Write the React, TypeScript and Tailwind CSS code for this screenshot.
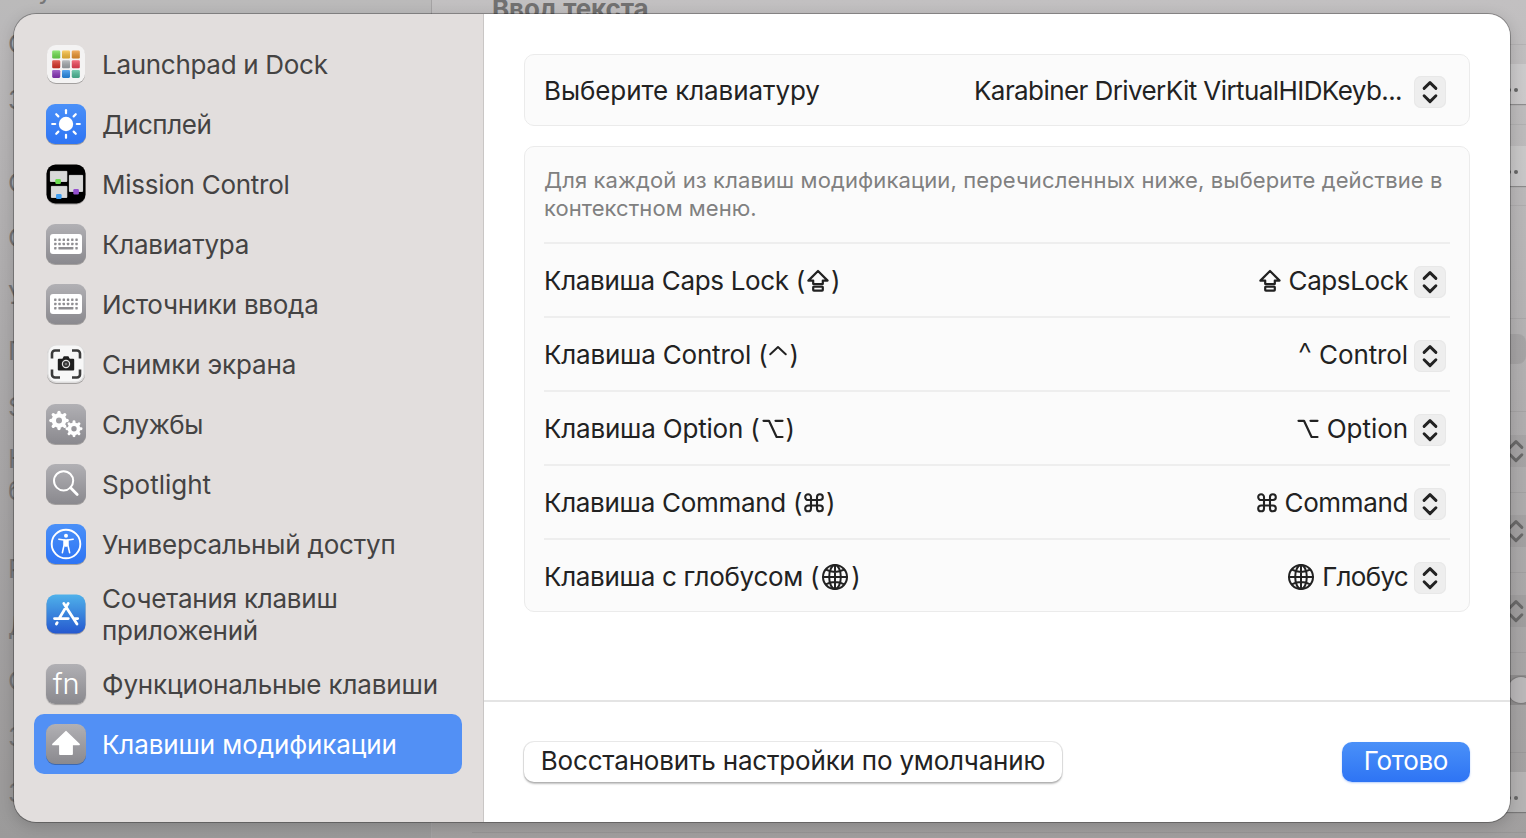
import type { ReactNode } from "react";

const tile = "block size-10 shrink-0 drop-shadow-[0_1px_0.6px_rgba(0,0,0,0.28)]";

function Defs() {
  return (
    <svg className="absolute size-0" aria-hidden="true">
      <defs>
        <linearGradient id="gray" x1="0" y1="0" x2="0" y2="1">
          <stop offset="0" stopColor="#b1b0b4" />
          <stop offset="1" stopColor="#8a898e" />
        </linearGradient>
        <linearGradient id="blue" x1="0" y1="0" x2="0" y2="1">
          <stop offset="0" stopColor="#4a90f8" />
          <stop offset="1" stopColor="#2e74f4" />
        </linearGradient>
        <linearGradient id="store" x1="0" y1="0" x2="0" y2="1">
          <stop offset="0" stopColor="#4fb1ea" />
          <stop offset="1" stopColor="#2558cf" />
        </linearGradient>
        <linearGradient id="shade" x1="0" y1="0" x2="0" y2="1">
          <stop offset="0" stopColor="#fff" stopOpacity=".25" />
          <stop offset="1" stopColor="#000" stopOpacity=".15" />
        </linearGradient>
      </defs>
    </svg>
  );
}

function Tile({ fill, children }: { fill: string; children: ReactNode }) {
  return (
    <svg viewBox="0 0 40 40" className={tile}>
      <rect width="40" height="40" rx="9" fill={fill} />
      {children}
    </svg>
  );
}

function LaunchpadIcon() {
  const colors = ["#6fe04e", "#f9bd3a", "#ee9630", "#dc3427", "#a5aaae", "#f24459", "#8a35bb", "#2a8eec", "#4fbd9b"];
  return (
    <svg viewBox="0 0 40 40" className={tile}>
      <rect x="1" y="1" width="38" height="38" rx="9" fill="#f4f3f3" />
      {colors.map((c, i) => (
        <g key={c} transform={`translate(${6.2 + (i % 3) * 9.8} ${6.5 + Math.floor(i / 3) * 9.7})`}>
          <rect width="8" height="8" rx="1.3" fill={c} />
          <rect width="8" height="8" rx="1.3" fill="url(#shade)" />
        </g>
      ))}
    </svg>
  );
}

function DisplayIcon() {
  return (
    <Tile fill="url(#blue)">
      <circle cx="20" cy="20" r="7.2" fill="#fff" />
      <g stroke="#fff" strokeWidth="2.2" strokeLinecap="round">
        {[0, 45, 90, 135, 180, 225, 270, 315].map((a) => (
          <path key={a} d="M20 6.2v3" transform={`rotate(${a} 20 20)`} />
        ))}
      </g>
    </Tile>
  );
}

function MissionIcon() {
  return (
    <svg viewBox="0 0 40 40" className={tile}>
      <rect x=".5" y=".5" width="39" height="39" rx="9" fill="#000" />
      <g fill="#d9d9d9" stroke="#f2f2f2" strokeWidth=".8">
        <path d="M4.4 7.4h16.4v10H4.4zM5.4 22.4h15.4v11H5.4zM23.4 11.4h13.2v16H23.4z" />
      </g>
      <rect x="9.3" y="15" width="5.6" height="5" rx="1.2" fill="#6cdc50" />
      <rect x="10" y="30" width="5.6" height="5" rx="1.2" fill="#3f9df0" />
      <rect x="27.3" y="25" width="5.6" height="5.4" rx="1.2" fill="#9450cf" />
    </svg>
  );
}

function KeyboardIcon() {
  return (
    <Tile fill="url(#gray)">
      <rect x="4" y="10" width="32" height="20" rx="3" fill="#fff" />
      <g fill="#8f8e92">
        {[0, 1, 2, 3, 4, 5].map((i) => (
          <g key={i}>
            <rect x={8.1 + i * 4.25} y="14.6" width="2.4" height="2.4" rx=".4" />
            <rect x={8.1 + i * 4.25} y="18.8" width="2.4" height="2.4" rx=".4" />
          </g>
        ))}
        <rect x="8.1" y="23" width="2.4" height="2.4" rx=".4" />
        <rect x="12.4" y="23" width="15" height="2.4" rx=".4" />
        <rect x="29.35" y="23" width="2.4" height="2.4" rx=".4" />
      </g>
    </Tile>
  );
}

function ScreenshotIcon() {
  return (
    <svg viewBox="0 0 40 40" className={tile}>
      <rect x="1" y="1" width="38" height="38" rx="9" fill="#dddcdc" />
      <rect x="2.5" y="1.5" width="35" height="36" rx="8" fill="#f7f7f7" />
      <path
        d="M6 14V9a3 3 0 0 1 3-3h5M26 6h5a3 3 0 0 1 3 3v5M34 25v5a3 3 0 0 1-3 3h-5M14 33H9a3 3 0 0 1-3-3v-5"
        transform="translate(0 .5)"
        fill="none"
        stroke="#3a3a3a"
        strokeWidth="2.6"
      />
      <path d="M12.8 14.8h3.6l1.4-2.6h4.6l1.4 2.6h3.4q1 0 1 1v9.6q0 1-1 1H12.8q-1 0-1-1v-9.6q0-1 1-1z" fill="#1f1f1f" />
      <circle cx="20" cy="20" r="3.6" fill="#333" stroke="#e4e4e4" strokeWidth="1.2" />
      <circle cx="20" cy="20" r="1.3" fill="#777" />
    </svg>
  );
}

function Gear({ x, y, r, hole }: { x: number; y: number; r: number; hole: number }) {
  return (
    <g transform={`translate(${x} ${y})`}>
      <circle r={(r * 0.78 + hole) / 2} fill="none" stroke="#fff" strokeWidth={r * 0.78 - hole} />
      {[0, 45, 90, 135, 180, 225, 270, 315].map((a) => (
        <path
          key={a}
          d={`M0 ${-r * 0.66}V${-r + r * 0.14}`}
          stroke="#fff"
          strokeWidth={r * 0.36}
          strokeLinecap="round"
          transform={`rotate(${a})`}
        />
      ))}
    </g>
  );
}

function ServicesIcon() {
  return (
    <Tile fill="url(#gray)">
      <Gear x={13} y={16.5} r={9.4} hole={3} />
      <Gear x={28} y={24.8} r={8.2} hole={2.7} />
    </Tile>
  );
}

function SpotlightIcon() {
  return (
    <Tile fill="url(#gray)">
      <circle cx="17.6" cy="16.8" r="9.6" fill="none" stroke="#fff" strokeWidth="2" />
      <path d="M24.6 23.8l6.6 6.6" stroke="#fff" strokeWidth="2.8" strokeLinecap="round" />
    </Tile>
  );
}

function AccessibilityIcon() {
  return (
    <Tile fill="url(#blue)">
      <circle cx="20" cy="20" r="14.3" fill="none" stroke="#fff" strokeWidth="1.9" />
      <circle cx="20" cy="11.8" r="2" fill="#fff" />
      <path d="M12.8 15.2l5.4.8v4.4l-1.8 8.2M27.2 15.2l-5.4.8v4.4l1.8 8.2" fill="none" stroke="#fff" strokeWidth="1.6" strokeLinecap="round" strokeLinejoin="round" />
      <path d="M17.6 15.2h4.8v5.2l-1 2.4h-2.8l-1-2.4z" fill="#fff" />
    </Tile>
  );
}

function AppStoreIcon() {
  return (
    <svg viewBox="0 0 40 40" className={tile}>
      <rect x=".5" y=".5" width="39" height="39" rx="9" fill="url(#store)" />
      <g stroke="#fff" strokeWidth="2.8" strokeLinecap="round" fill="none">
        <path d="M22.2 9.4l-8.6 14.4M17.8 9.4l13.2 20.6M8.5 24.6h13.8M28.3 24.6h3.4M11.2 28.6l-.8 1.4" />
      </g>
    </svg>
  );
}

function FnIcon() {
  return (
    <div className="flex size-10 shrink-0 items-center justify-center rounded-[9px] bg-linear-to-b from-[#b1b0b4] to-[#8a898e] pb-px text-[29px] leading-none font-light tracking-[-0.2px] text-white shadow-[0_1px_1px_rgba(0,0,0,0.28)]">
      fn
    </div>
  );
}

function ShiftIcon() {
  return (
    <Tile fill="url(#gray)">
      <path d="M20 7.8L33 20.4H26V30H14V20.4H7z" fill="#fff" stroke="#fff" strokeWidth="1.8" strokeLinejoin="round" />
    </Tile>
  );
}

const nav: { icon: ReactNode; label: string; track: string; tall?: boolean; active?: boolean }[] = [
  { icon: <LaunchpadIcon />, label: "Launchpad и Dock", track: "tracking-[-0.3px]" },
  { icon: <DisplayIcon />, label: "Дисплей", track: "tracking-[-0.4px]" },
  { icon: <MissionIcon />, label: "Mission Control", track: "tracking-[-0.26px]" },
  { icon: <KeyboardIcon />, label: "Клавиатура", track: "tracking-[-0.26px]" },
  { icon: <KeyboardIcon />, label: "Источники ввода", track: "tracking-[-0.26px]" },
  { icon: <ScreenshotIcon />, label: "Снимки экрана", track: "tracking-[-0.14px]" },
  { icon: <ServicesIcon />, label: "Службы", track: "tracking-[-0.5px]" },
  { icon: <SpotlightIcon />, label: "Spotlight", track: "tracking-[0px]" },
  { icon: <AccessibilityIcon />, label: "Универсальный доступ", track: "tracking-[-0.19px]" },
  { icon: <AppStoreIcon />, label: "Сочетания клавиш\nприложений", track: "tracking-[-0.23px]", tall: true },
  { icon: <FnIcon />, label: "Функциональные клавиши", track: "tracking-[-0.14px]" },
  { icon: <ShiftIcon />, label: "Клавиши модификации", track: "tracking-[-0.1px]", active: true },
];

function Sidebar() {
  return (
    <nav className="w-[470px] shrink-0 border-r border-[#c9c6c5] bg-[#e2dedd] px-5 pt-5">
      {nav.map((n) => (
        <div
          key={n.label}
          className={`flex w-[428px] items-center gap-4 rounded-[10px] px-3 ${n.tall ? "h-20" : "h-15"} ${n.active ? "bg-[#5290f5] text-white" : "text-[#444343]"}`}
        >
          {n.icon}
          <span className={`pt-0.5 leading-8 whitespace-pre ${n.track}`}>{n.label}</span>
        </div>
      ))}
    </nav>
  );
}

const stroke = {
  fill: "none",
  stroke: "currentColor",
  strokeWidth: 2.2,
  strokeLinecap: "round" as const,
  strokeLinejoin: "round" as const,
};

function CapsGlyph() {
  return (
    <svg viewBox="0 0 22 28" className="h-7 w-[22px]" {...stroke}>
      <path d="M11 4L1.4 13.6H6.2V17H15.8V13.6H20.6zM6.9 19.6h8.2q.7 0 .7.7v2.6q0 .7-.7.7H6.9q-.7 0-.7-.7v-2.6q0-.7.7-.7z" />
    </svg>
  );
}

function ControlGlyph() {
  return (
    <svg viewBox="0 0 20 28" className="h-7 w-[18px]" {...stroke}>
      <path d="M1.4 13.2L10 5.2L18.6 13.2" />
    </svg>
  );
}

function OptionGlyph() {
  return (
    <svg viewBox="0 0 22 28" className="h-7 w-[22px]" {...stroke}>
      <path d="M1.5 5.8H7L14.6 22H20.5M13.5 5.8h7" />
    </svg>
  );
}

function CommandGlyph() {
  return (
    <svg viewBox="0 0 20 28" className="h-7 w-5" {...stroke} strokeWidth={2.1}>
      <path d="M7 10.8V8.2A2.9 2.9 0 1 0 4.1 11H16A2.9 2.9 0 1 0 13 8.1V19.4A2.9 2.9 0 1 0 16 16.5H4.1A2.9 2.9 0 1 0 7 19.4Z" />
    </svg>
  );
}

function GlobeGlyph() {
  return (
    <svg viewBox="0 0 28 28" className="size-7" {...stroke} strokeWidth={2}>
      <circle cx="14" cy="14" r="12" />
      <ellipse cx="14" cy="14" rx="5.8" ry="12" />
      <path d="M14 2v24M2 14h24M4.8 6.7q9.2 4.4 18.4 0M4.8 21.3q9.2-4.4 18.4 0" />
    </svg>
  );
}

function Chevrons() {
  return (
    <svg viewBox="0 0 32 32" className="size-8" fill="none" stroke="currentColor" strokeWidth="2.9" strokeLinecap="round" strokeLinejoin="round">
      <path d="M10.1 12.4L16 6.6L21.9 12.4M10.1 19.8L16 25.6L21.9 19.8" />
    </svg>
  );
}

function Stepper() {
  return (
    <div className="size-8 shrink-0 rounded-[7px] bg-[#eeeeee] text-[#222] shadow-[inset_0_0_0_1px_#e8e8e8]">
      <Chevrons />
    </div>
  );
}

const rows: {
  label: string;
  track: string;
  glyph: ReactNode;
  value: string;
  valueTrack: string;
  mark: ReactNode;
  gap: string;
}[] = [
  { label: "Клавиша Caps Lock (", track: "tracking-[-0.33px]", glyph: <CapsGlyph />, value: "CapsLock", valueTrack: "tracking-[-0.4px]", mark: <CapsGlyph />, gap: "mr-[8px]" },
  { label: "Клавиша Control (", track: "tracking-[-0.2px]", glyph: <ControlGlyph />, value: "Control", valueTrack: "tracking-[-0.1px]", mark: <span className="text-[31px] font-light">^</span>, gap: "mr-[7px]" },
  { label: "Клавиша Option (", track: "tracking-[-0.2px]", glyph: <OptionGlyph />, value: "Option", valueTrack: "tracking-[-0.05px]", mark: <OptionGlyph />, gap: "mr-[8px]" },
  { label: "Клавиша Command (", track: "tracking-[-0.3px]", glyph: <CommandGlyph />, value: "Command", valueTrack: "tracking-[-0.36px]", mark: <CommandGlyph />, gap: "mr-[8px]" },
  { label: "Клавиша с глобусом (", track: "tracking-[-0.3px]", glyph: <GlobeGlyph />, value: "Глобус", valueTrack: "tracking-[-0.7px]", mark: <GlobeGlyph />, gap: "mr-[7px]" },
];

function Content() {
  return (
    <main className="flex min-w-0 flex-1 flex-col bg-white text-[#222]">
      <div className="flex h-[686px] flex-col gap-5 px-10 pt-10">
        <section className="flex h-[72px] items-center rounded-[10px] border border-[#ebebeb] bg-[#fbfbfb] pr-[23px] pl-[19px]">
          <span className="pt-0.5 tracking-[-0.1px]">Выберите клавиатуру</span>
          <span className="mr-3 ml-auto pt-0.5 tracking-[-0.58px]">Karabiner DriverKit VirtualHIDKeyb...</span>
          <div className="pt-1">
            <Stepper />
          </div>
        </section>
        <section className="h-[466px] rounded-[10px] border border-[#ebebeb] bg-[#fbfbfb] px-[19px]">
          <p className="h-[95px] pt-[19px] text-[22px] leading-7 whitespace-pre text-[#808080]">
            <span className="tracking-[0.12px]">Для каждой из клавиш модификации, перечисленных ниже, выберите действие в</span>
            {"\n"}
            <span className="tracking-[0.05px]">контекстном меню.</span>
          </p>
          {rows.map((r) => (
            <div key={r.label} className="flex h-[74px] items-center border-t-2 border-[#eeeeee] pr-1">
              <span className={`pt-0.5 ${r.track}`}>{r.label}</span>
              <span className="mx-0.5 pt-0.5">{r.glyph}</span>
              <span className="pt-0.5">)</span>
              <span className={`ml-auto pt-0.5 ${r.gap}`}>{r.mark}</span>
              <span className={`mr-[6px] pt-0.5 ${r.valueTrack}`}>{r.value}</span>
              <div className="pt-1">
                <Stepper />
              </div>
            </div>
          ))}
        </section>
      </div>
      <footer className="flex flex-1 items-center justify-between border-t-2 border-[#e4e4e4] px-10">
        <button className="h-10 w-[538px] rounded-[10px] bg-white pb-0.5 tracking-[-0.19px] whitespace-nowrap shadow-[0_0_0_1px_rgba(0,0,0,0.08),0_1.5px_2px_rgba(0,0,0,0.25)]">
          Восстановить настройки по умолчанию
        </button>
        <button className="h-10 w-32 rounded-[10px] bg-linear-to-b from-[#4a90f8] to-[#2e74f4] pb-0.5 tracking-[-0.3px] text-white shadow-[0_1px_2px_rgba(46,116,244,0.35)]">
          Готово
        </button>
      </footer>
    </main>
  );
}

const letters = [
  { t: "С", y: 44 }, { t: "З", y: 100 }, { t: "С", y: 183 }, { t: "С", y: 238 }, { t: "У", y: 295 },
  { t: "П", y: 351 }, { t: "S", y: 407 }, { t: "К", y: 459 }, { t: "б", y: 491 }, { t: "Р", y: 569 },
  { t: "Д", y: 626 }, { t: "С", y: 681 }, { t: "З", y: 737 }, { t: "З", y: 793 },
];
const lines = [44, 124, 205, 318, 411, 492, 572, 652, 752, 832];
const buttons = [64, 146, 772];
const selects = [435, 515, 595];

function Backdrop() {
  return (
    <div className="absolute inset-0 overflow-hidden bg-linear-to-b from-[#c2c0c1] via-[#afadae] to-[#a19f9f]" aria-hidden="true">
      <div className="absolute inset-y-0 left-0 w-[432px] border-r border-[#a5a3a4] bg-black/3" />
      <div className="absolute -top-[26px] left-[38px] text-[#777]">у</div>
      <div className="absolute -top-[7px] left-[492px] font-bold tracking-[-0.1px] text-[#727171]">Ввод текста</div>
      {letters.map((l) => (
        <div key={l.y} className="absolute left-[8px] text-[#757474]" style={{ top: l.y - 16 }}>
          {l.t}
        </div>
      ))}
      {lines.map((y) => (
        <div key={y} className="absolute right-0 left-[472px] h-px bg-black/6" style={{ top: y }} />
      ))}
      {buttons.map((y) => (
        <div key={y} className="absolute right-0 flex h-10 w-9 items-center justify-end gap-[3px] bg-white/20 pt-3 pr-2 shadow-[0_1px_1px_rgba(0,0,0,0.25)]" style={{ top: y }}>
          <i className="size-[4px] rounded-full bg-[#666]" />
          <i className="size-[4px] rounded-full bg-[#666]" />
        </div>
      ))}
      <div className="absolute top-[334px] right-0 h-[30px] w-10 rounded-r-lg bg-black/7" />
      {selects.map((y) => (
        <div key={y} className="absolute right-[-6px] size-8 rounded-md bg-black/5 text-[#6a6969]" style={{ top: y }}>
          <Chevrons />
        </div>
      ))}
      <div className="absolute top-[675px] right-0 h-[30px] w-9 bg-black/13" />
      <div className="absolute top-[677px] left-[1508px] size-[26px] rounded-full bg-[#b9b7b8] shadow-[0_0_1px_1px_rgba(0,0,0,0.15)]" />
    </div>
  );
}

export default function App() {
  return (
    <div className="relative h-[838px] w-[1526px] overflow-hidden p-[14px] font-[Inter,sans-serif] text-[26px] leading-8">
      <Defs />
      <Backdrop />
      <div className="relative flex h-[808px] w-[1496px] overflow-hidden rounded-[22px] shadow-[0_0_0_1px_rgba(0,0,0,0.28),0_4px_16px_rgba(0,0,0,0.18)]">
        <Sidebar />
        <Content />
      </div>
    </div>
  );
}
